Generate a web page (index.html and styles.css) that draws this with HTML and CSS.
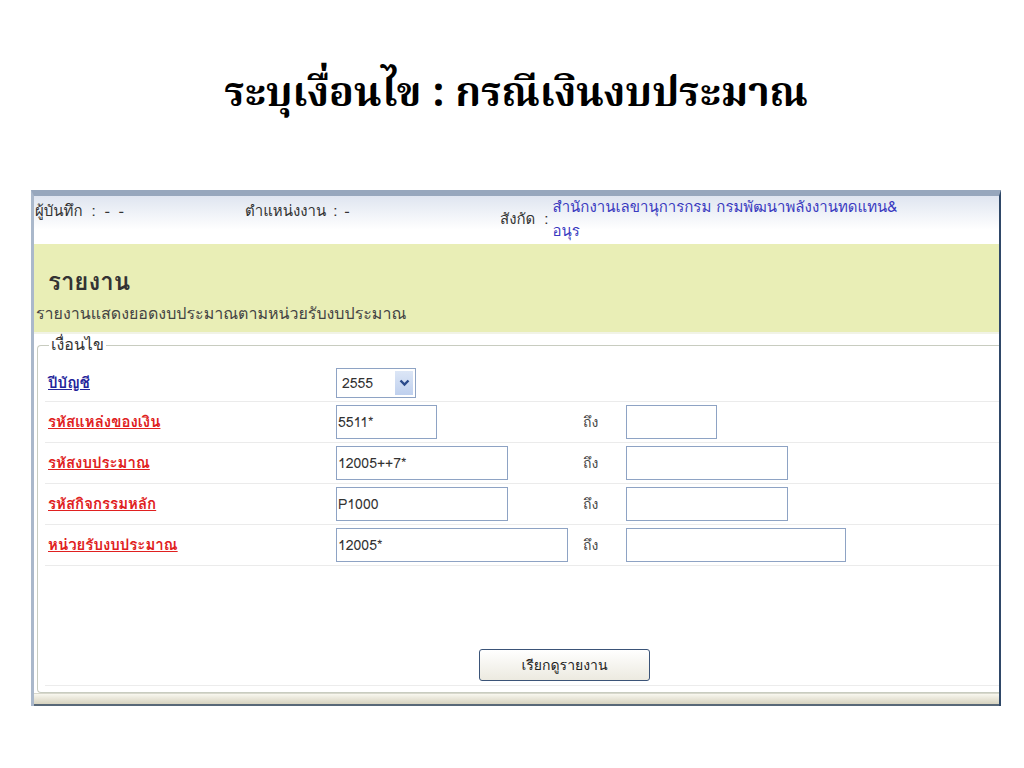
FILE: index.html
```html
<!DOCTYPE html>
<html lang="th">
<head>
<meta charset="utf-8">
<title>ระบุเงื่อนไข</title>
<link rel="stylesheet" href="styles.css">
</head>
<body>
<h1 class="title">ระบุเงื่อนไข : กรณีเงินงบประมาณ</h1>
<div class="window">
  <div class="header">
    <div class="hcell h1">ผู้บันทึก : - -</div>
    <div class="hcell h2">ตำแหน่งงาน : -</div>
    <div class="hcell h3"><span class="hlabel">สังกัด :</span><span class="org">สำนักงานเลขานุการกรม กรมพัฒนาพลังงานทดแทน&amp;<br>อนุร</span></div>
  </div>
  <div class="banner">
    <div class="banner-title">รายงาน</div>
    <div class="banner-sub">รายงานแสดงยอดงบประมาณตามหน่วยรับงบประมาณ</div>
  </div>
  <fieldset class="cond">
    <legend>เงื่อนไข</legend>
    <div class="row first">
      <a class="lbl blue">ปีบัญชี</a>
      <div class="from"><div class="select"><span>2555</span><span class="arrow"><svg width="11" height="8" viewBox="0 0 11 8"><path d="M1.5 1.5 L5.5 5.5 L9.5 1.5" fill="none" stroke="#2a4a8a" stroke-width="2.4"/></svg></span></div></div>
    </div>
    <div class="row">
      <a class="lbl">รหัสแหล่งของเงิน</a>
      <div class="from"><div class="inp w101">5511*</div></div>
      <div class="to">ถึง</div>
      <div class="inp w91"></div>
    </div>
    <div class="row">
      <a class="lbl">รหัสงบประมาณ</a>
      <div class="from"><div class="inp w172">12005++7*</div></div>
      <div class="to">ถึง</div>
      <div class="inp w162"></div>
    </div>
    <div class="row">
      <a class="lbl">รหัสกิจกรรมหลัก</a>
      <div class="from"><div class="inp w172">P1000</div></div>
      <div class="to">ถึง</div>
      <div class="inp w162"></div>
    </div>
    <div class="row">
      <a class="lbl">หน่วยรับงบประมาณ</a>
      <div class="from"><div class="inp w232">12005*</div></div>
      <div class="to">ถึง</div>
      <div class="inp w220"></div>
    </div>
    <div class="actions">
      <button class="btn">เรียกดูรายงาน</button>
    </div>
  </fieldset>
  <div class="foot"></div>
</div>
</body>
</html>
```
FILE: styles.css
```css
html, body {
  margin: 0;
  padding: 0;
  background: #ffffff;
}
body {
  width: 1024px;
  height: 768px;
  overflow: hidden;
  font-family: "Tahoma", "Loma", "Noto Sans", "DejaVu Sans", sans-serif;
  color: #333;
}
.title {
  margin: 0;
  padding-top: 68px;
  height: 120px;
  box-sizing: border-box;
  text-align: center;
  font-family: "Kinnari", "Norasi", "Noto Serif Thai", "Liberation Serif", serif;
  font-weight: bold;
  font-size: 41px;
  line-height: 54px;
  color: #000;
  padding-left: 8px;
}
.window {
  margin-top: 70px;
  margin-left: 31px;
  width: 970px;
  height: 516px;
  box-sizing: border-box;
  border-top: 6px solid #97a7bd;
  border-left: 3px solid #aab8cb;
  border-right: 2px solid #2f4868;
  background: #fff;
  display: flex;
  flex-direction: column;
}
.header {
  height: 48px;
  flex: none;
  background: linear-gradient(#dfe5f0, #ffffff 70%);
  display: flex;
  font-size: 15px;
  color: #333;
}
.hcell { padding-top: 3px; }
.h1 { width: 210px; padding-left: 1px; word-spacing: 4px; }
.h2 { width: 255px; word-spacing: 2px; }
.h3 { display: flex; }
.hlabel { padding-top: 8px; margin-right: 4px; word-spacing: 4px; }
.org { color: #3a3ac0; line-height: 24px; margin-top: -4px; }
.banner {
  height: 90px;
  flex: none;
  background: #e9eeb6;
  padding: 26px 0 0 2px;
  box-sizing: border-box;
  border-bottom: 2px solid #f1f3e6;
}
.banner-title {
  font-size: 24px;
  font-weight: bold;
  color: #333;
  padding-left: 12px;
  line-height: 24px;
}
.banner-sub {
  font-size: 16px;
  color: #444;
  line-height: 20px;
  margin-top: 10px;
}
.cond {
  margin: 2px 0 0 3px;
  padding: 0 0 0 7px;
  border: 1px solid #c8ccc0;
  border-right: none;
  border-radius: 4px 0 0 4px;
  flex: 1;
  min-width: 0;
}
.cond legend {
  font-size: 16px;
  color: #333;
  padding: 0 2px;
  margin-left: 4px;
  line-height: 18px;
}
.row {
  height: 41px;
  display: flex;
  align-items: center;
  border-bottom: 1px solid #ebebeb;
  font-size: 13px;
  box-sizing: border-box;
}
.row.first {
  height: 48px;
  padding-top: 10px;
}
.lbl {
  width: 288px;
  padding-left: 3px;
  color: #e02020;
  font-weight: bold;
  text-decoration: underline;
  font-size: 15px;
}
.lbl.blue { color: #23239a; }
.from { width: 247px; display: flex; }
.to { width: 43px; color: #444; font-size: 14px; }
.inp {
  height: 34px;
  box-sizing: border-box;
  border: 1px solid #8ea3c4;
  font-size: 14px;
  color: #333;
  padding-left: 1px;
  display: flex;
  align-items: center;
  background: #fff;
}
.w101 { width: 101px; }
.w91 { width: 91px; }
.w172 { width: 172px; }
.w162 { width: 162px; }
.w232 { width: 232px; }
.w220 { width: 220px; }
.select {
  width: 80px;
  height: 30px;
  box-sizing: border-box;
  border: 1px solid #8ea3c4;
  display: flex;
  align-items: center;
  justify-content: space-between;
  padding: 2px 2px 2px 5px;
  font-size: 14px;
  color: #333;
}
.arrow {
  width: 18px;
  height: 24px;
  background: linear-gradient(#dce6f6, #bfd0ee);
  display: flex;
  align-items: center;
  justify-content: center;
}
.actions {
  height: 120px;
  display: flex;
  align-items: flex-end;
  justify-content: flex-start;
  border-bottom: 1px solid #ececec;
  padding-bottom: 4px;
  box-sizing: border-box;
}
.btn {
  width: 171px;
  height: 32px;
  margin-left: 434px;
  border: 1px solid #3b5478;
  border-radius: 3px;
  background: linear-gradient(#ffffff, #eceae0);
  font-family: inherit;
  font-size: 14px;
  color: #222;
}
.foot {
  height: 10px;
  flex: none;
  border-top: 1px solid #d8d8cc;
  background: linear-gradient(#f8f7ef, #d7d3bf);
  border-bottom: 2px solid #586878;
}
```
